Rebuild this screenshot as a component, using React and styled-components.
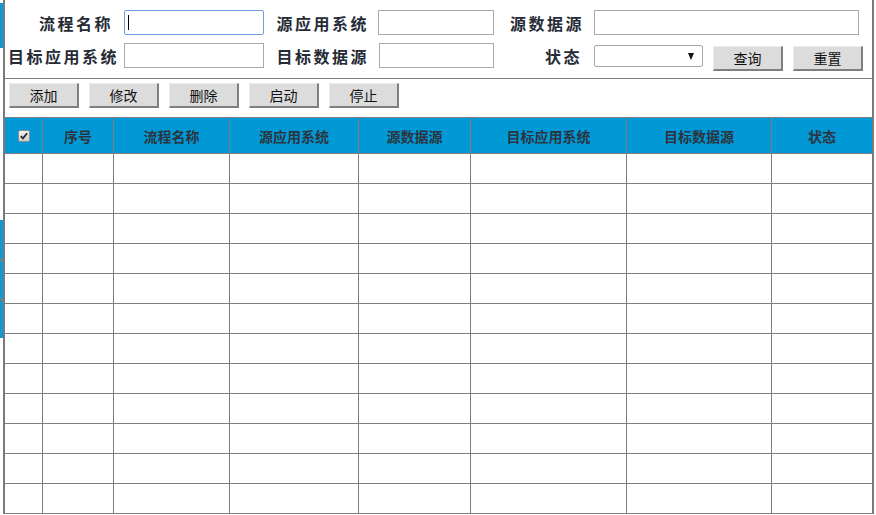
import styled, { createGlobalStyle } from 'styled-components';

const GlobalStyle = createGlobalStyle`
  html, body {
    margin: 0;
    padding: 0;
    background: #fff;
  }
  body {
    font-family: "Noto Sans CJK SC", "Liberation Sans", sans-serif;
    color: #222;
  }
`;

const columns = [
  { key: 'check', title: '', width: '38px' },
  { key: 'no', title: '序号', width: '71px' },
  { key: 'name', title: '流程名称', width: '116px' },
  { key: 'srcApp', title: '源应用系统', width: '129px' },
  { key: 'srcDs', title: '源数据源', width: '112px' },
  { key: 'dstApp', title: '目标应用系统', width: '156px' },
  { key: 'dstDs', title: '目标数据源', width: '145px' },
  { key: 'state', title: '状态', width: '1fr' },
];

const gridCols = columns.map((c) => c.width).join(' ');
const rows = Array.from({ length: 12 }, (_, i) => i);
const actions = ['添加', '修改', '删除', '启动', '停止'];

export default function App() {
  return (
    <>
      <GlobalStyle />
      <Page>
        <Strip>
          <StripPiece $h={3} />
          <StripPiece $h={45} $blue />
          <StripPiece $h={172} />
          <StripPiece $h={39} $blue />
          <StripPiece $h={2} $gray />
          <StripPiece $h={38} $blue />
          <StripPiece $h={2} $gray />
          <StripPiece $h={37} $blue />
        </Strip>
        <Panel>
          <SearchForm>
            <FormRow>
              <Label $w={119} $pr={11}>流程名称</Label>
              <InputWrap>
                <TextInput $w={140} $focused readOnly value='' />
                <Caret />
              </InputWrap>
              <Label $w={114} $pr={9}>源应用系统</Label>
              <TextInput $w={116} readOnly value='' />
              <Label $w={100} $pr={10}>源数据源</Label>
              <TextInput $w={265} readOnly value='' />
            </FormRow>
            <FormRow>
              <Label $w={119} $pr={5}>目标应用系统</Label>
              <TextInput $w={140} readOnly value='' />
              <Label $w={115} $pr={10}>目标数据源</Label>
              <TextInput $w={115} readOnly value='' />
              <Label $w={100} $pr={12}>状态</Label>
              <FakeSelect>
                <Arrow />
              </FakeSelect>
              <FormButton $ml={10}>查询</FormButton>
              <FormButton $ml={10}>重置</FormButton>
            </FormRow>
          </SearchForm>

          <Toolbar>
            {actions.map((a) => (
              <ToolButton key={a}>{a}</ToolButton>
            ))}
          </Toolbar>

          <Grid>
            <HeadRow>
              {columns.map((c) =>
                c.key === 'check' ? (
                  <HeadCell key={c.key}>
                    <svg width='12' height='12' viewBox='0 0 12 12'>
                      <defs>
                        <linearGradient id='cb' x1='0' y1='0' x2='0' y2='1'>
                          <stop offset='0' stopColor='#f2f2f2' />
                          <stop offset='1' stopColor='#cfcfcf' />
                        </linearGradient>
                      </defs>
                      <rect x='0.5' y='0.5' width='11' height='11' rx='1.5' fill='url(#cb)' stroke='#8c8c8c' />
                      <path d='M2.8 6.2 L4.9 8.4 L9.2 3.2' fill='none' stroke='#2a2a2a' strokeWidth='1.8' />
                    </svg>
                  </HeadCell>
                ) : (
                  <HeadCell key={c.key}>{c.title}</HeadCell>
                )
              )}
            </HeadRow>
            {rows.map((r) => (
              <BodyRow key={r}>
                {columns.map((c) => (
                  <BodyCell key={c.key} />
                ))}
              </BodyRow>
            ))}
          </Grid>
        </Panel>
      </Page>
    </>
  );
}

const Page = styled.div`
  display: flex;
  width: 876px;
  height: 515px;
  overflow: hidden;
`;

const Strip = styled.div`
  width: 3px;
  display: flex;
  flex-direction: column;
`;

const StripPiece = styled.div`
  height: ${({ $h }) => $h}px;
  background: ${({ $blue, $gray }) => ($blue ? '#0d9ad6' : $gray ? '#7f7f7f' : '#fff')};
`;

const Panel = styled.div`
  width: 867px;
  height: 514px;
  border-left: 2px solid #7a7a7a;
  border-right: 2px solid #7a7a7a;
  display: flex;
  flex-direction: column;
`;

const SearchForm = styled.div`
  display: flex;
  flex-direction: column;
  gap: 8px;
  padding: 10px 0 10px;
  border-bottom: 1px solid #7f7f7f;
`;

const FormRow = styled.div`
  display: flex;
  align-items: center;
  height: 25px;
`;

const Label = styled.div`
  width: ${({ $w }) => $w}px;
  box-sizing: border-box;
  padding-right: ${({ $pr }) => $pr}px;
  text-align: right;
  font-size: 16px;
  font-weight: bold;
  letter-spacing: 2.5px;
  color: #262b36;
  white-space: nowrap;
`;

const InputWrap = styled.div`
  position: relative;
  display: flex;
`;

const TextInput = styled.input`
  width: ${({ $w }) => $w}px;
  height: 25px;
  box-sizing: border-box;
  margin: 0;
  padding: 0 4px;
  border: 1px solid ${({ $focused }) => ($focused ? '#6f9fdf' : '#a9a9a9')};
  border-radius: ${({ $focused }) => ($focused ? '2px' : '0')};
  outline: none;
  background: #fff;
  font-size: 14px;
`;

const Caret = styled.span`
  position: absolute;
  left: 4px;
  top: 5px;
  width: 1px;
  height: 15px;
  background: #000;
`;

const FakeSelect = styled.div`
  width: 109px;
  height: 22px;
  box-sizing: border-box;
  border: 1px solid #a9a9a9;
  border-radius: 2px;
  background: #fff;
  display: flex;
  align-items: center;
  justify-content: flex-end;
  padding-right: 8px;
  margin-top: 1px;
`;

const Arrow = styled.span`
  width: 0;
  height: 0;
  border-left: 3.5px solid transparent;
  border-right: 3.5px solid transparent;
  border-top: 7px solid #111;
`;

const ButtonBase = styled.button`
  width: 70px;
  height: 25px;
  box-sizing: border-box;
  margin: 0;
  padding: 0;
  background: #dcdcdc;
  border-top: 1px solid #ececec;
  border-left: 1px solid #ececec;
  border-right: 2px solid #7f7f7f;
  border-bottom: 2px solid #7f7f7f;
  border-radius: 0;
  font-family: "Noto Sans CJK SC", "Liberation Sans", sans-serif;
  font-size: 14px;
  color: #111;
  line-height: 20px;
`;

const FormButton = styled(ButtonBase)`
  margin-left: ${({ $ml }) => $ml}px;
  margin-top: 6px;
`;

const Toolbar = styled.div`
  display: flex;
  gap: 10px;
  padding: 4px 0 9px 4px;
  border-bottom: 1px solid #7f7f7f;
`;

const ToolButton = styled(ButtonBase)``;

const Grid = styled.div`
  display: flex;
  flex-direction: column;
`;

const HeadRow = styled.div`
  display: grid;
  grid-template-columns: ${gridCols};
  height: 36px;
  background: #0099d5;
  border-bottom: 1px solid #7f7f7f;
  box-sizing: border-box;
`;

const HeadCell = styled.div`
  display: flex;
  align-items: center;
  justify-content: center;
  border-right: 1px solid #7f7f7f;
  font-size: 14px;
  font-weight: bold;
  color: #2b3440;
  &:last-child {
    border-right: none;
  }
`;

const BodyRow = styled.div`
  display: grid;
  grid-template-columns: ${gridCols};
  height: 30px;
  border-bottom: 1px solid #7f7f7f;
  box-sizing: border-box;
`;

const BodyCell = styled.div`
  border-right: 1px solid #7f7f7f;
  &:last-child {
    border-right: none;
  }
`;
